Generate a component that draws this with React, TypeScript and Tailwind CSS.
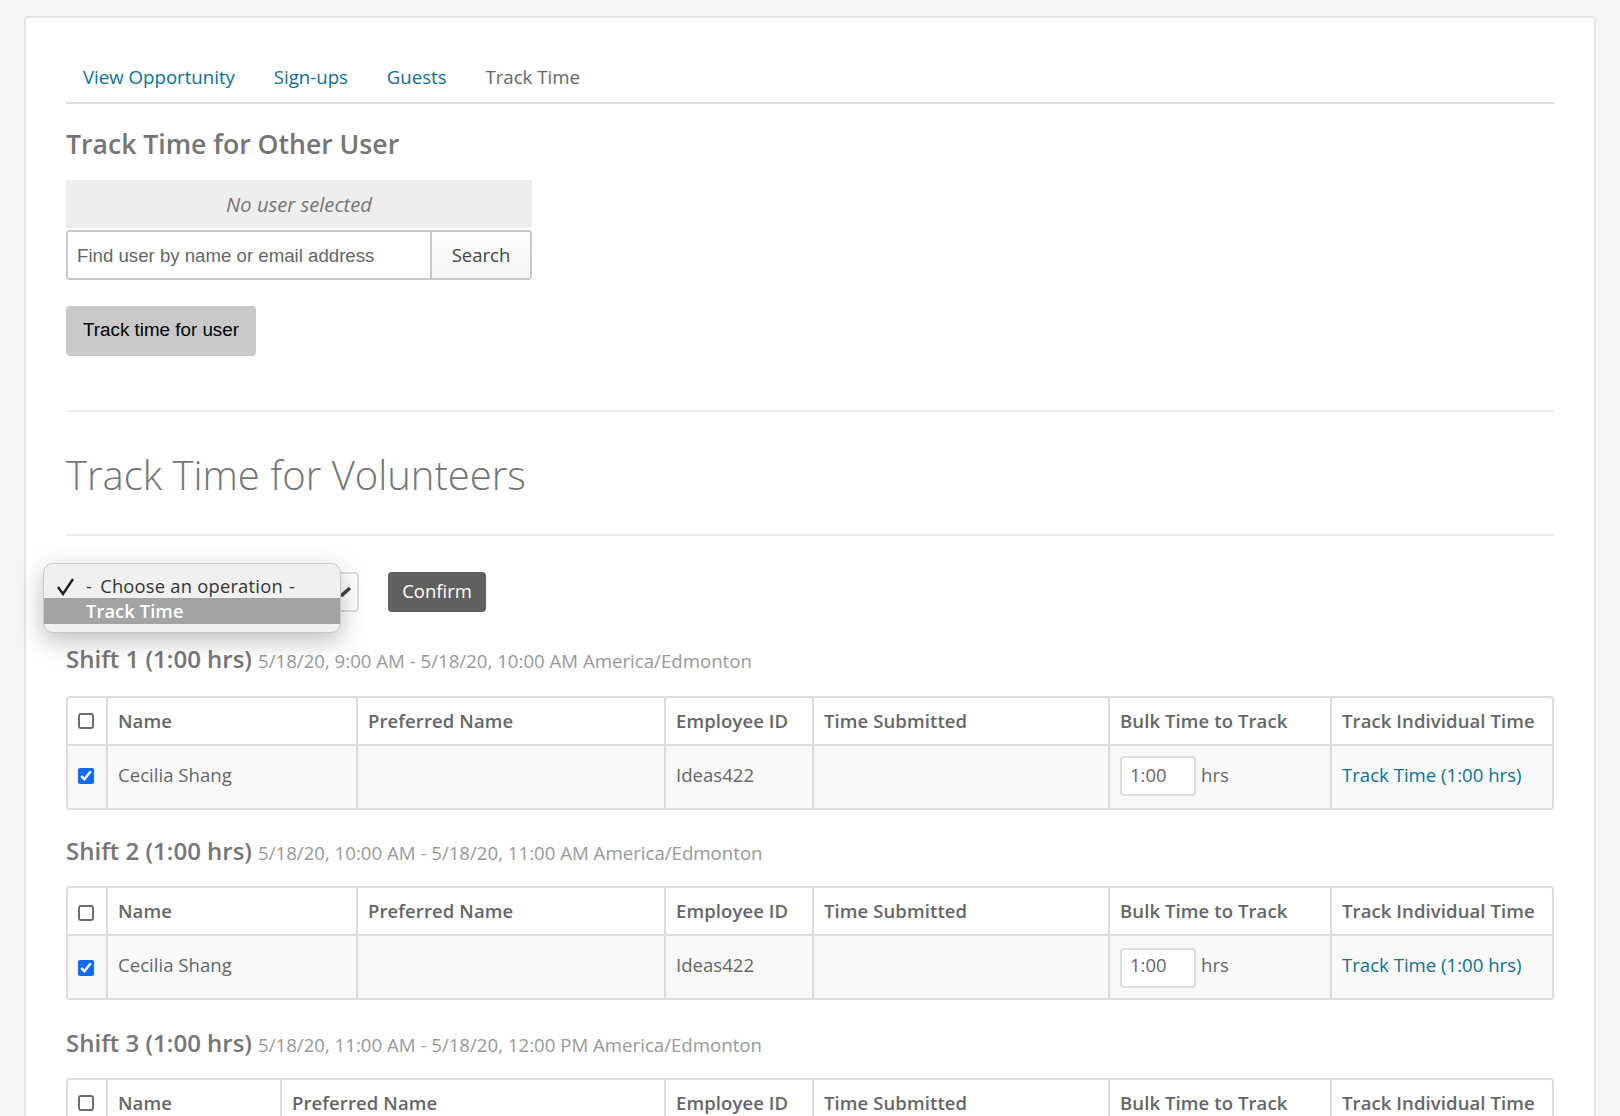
import React from 'react'

const font = "font-['Open_Sans',sans-serif]";

function Cell({ children, className = '' }: { children?: React.ReactNode; className?: string }) {
  return <div className={`flex items-center pl-[10px] border-l-2 border-[#dddddd] first:border-l-0 ${className}`}>{children}</div>;
}

function ShiftTable({ narrowName, lowered }: { narrowName?: boolean; lowered?: boolean }) {
  const cols = narrowName
    ? 'grid-cols-[38px_174px_384px_148px_296px_222px_1fr]'
    : 'grid-cols-[38px_250px_308px_148px_296px_222px_1fr]';
  const heads = ['Name', 'Preferred Name', 'Employee ID', 'Time Submitted', 'Bulk Time to Track', 'Track Individual Time'];

  return (
    <div className="border-2 border-[#dddddd] rounded-[4px] w-[1488px]">
      <div className={`grid ${cols} h-[48px] border-b-2 border-[#dddddd] font-semibold text-[#666666] text-[18.5px] tracking-[0.1px]`}>
        <Cell className={`justify-center !pl-0 pr-[2px] ${lowered ? 'pt-[3px]' : ''}`}>
          <input type="checkbox" className="appearance-none w-[16px] h-[16px] bg-white border-2 border-[#6e6e6e] rounded-[3px]" />
        </Cell>
        {heads.map((h) => <Cell key={h}>{h}</Cell>)}
      </div>
      <div className={`grid ${cols} h-[62px] bg-[#f9f9f9] text-[#666666] text-[18.6px]`}>
        <Cell className={`justify-center !pl-0 pr-[2px] ${lowered ? 'pt-[1px]' : 'pb-[3px]'}`}>
          <input type="checkbox" defaultChecked className="w-[16px] h-[16px] accent-[#0b6bf5]" />
        </Cell>
        <Cell className="pb-[5px]">Cecilia Shang</Cell>
        <Cell />
        <Cell className="pb-[5px]">Ideas422</Cell>
        <Cell />
        <Cell className={lowered ? 'pt-[1px]' : 'pb-[3px]'}>
          <input
            readOnly
            value="1:00"
            className={`w-[76px] h-[40px] bg-white border-2 border-[#dddddd] rounded-[4px] pl-[8px] text-[18.5px] text-[#666666] outline-none ${lowered ? 'pb-[6px]' : 'pb-[2px]'}`}
          />
          <span className={`ml-[5px] ${lowered ? 'pb-[6px]' : 'pb-[2px]'}`}>hrs</span>
        </Cell>
        <Cell className="pb-[5px]"><span className="text-[#0f6f8f]">Track Time (1:00 hrs)</span></Cell>
      </div>
    </div>
  );
}

function ShiftHead({ title, when }: { title: string; when: string }) {
  return (
    <div className="flex items-baseline h-[34px]">
      <span className="font-semibold text-[24px] text-[#757575]">{title}</span>
      <span className="ml-[6px] text-[18.65px] text-[#999999]">{when}</span>
    </div>
  );
}

export default function App() {
  return (
    <div className={`${font} h-[1116px] overflow-hidden bg-[#f5f5f5] pt-[16px] pl-[24px]`}>
      <div className="relative w-[1572px] h-[1200px] bg-white border-2 border-[#e5e5e5] rounded-[4px] pt-[39px] px-[40px]">
        {/* Tabs */}
        <div className="flex items-center gap-[38.8px] pl-[17px] h-[47px] pb-[6px] border-b-2 border-[#dddddd] text-[18.65px] text-[#0f6f8f]">
          <a>View Opportunity</a>
          <a>Sign-ups</a>
          <a>Guests</a>
          <a className="text-[#666666]">Track Time</a>
        </div>

        {/* Other user */}
        <h2 className="mt-[21px] h-[38px] leading-[38px] font-semibold text-[26.6px] text-[#757575]">Track Time for Other User</h2>
        <div className="mt-[17px] w-[466px]">
          <div className="h-[48px] flex items-center justify-center bg-[#eeeeee] italic text-[20.2px] text-[#757575]">No user selected</div>
          <div className="mt-[2px] flex h-[50px] border-2 border-[#c8c8c8] rounded-[4px] overflow-hidden">
            <div className="flex-1 flex items-center pl-[9px] pt-[1px] bg-white font-['Liberation_Sans',sans-serif] text-[18.65px] text-[#666666]">Find user by name or email address</div>
            <div className="w-[100px] flex items-center justify-center border-l-2 border-[#c8c8c8] bg-gradient-to-b from-white to-[#f3f4f6] text-[18.5px] text-[#444444]">Search</div>
          </div>
        </div>
        <button className="mt-[26px] block w-[190px] h-[50px] pb-[2px] bg-[#c9c9c9] rounded-[4px] font-['Liberation_Sans',sans-serif] text-[18.8px] text-black">Track time for user</button>

        <hr className="mt-[54px] border-t-2 border-[#eeeeee]" />

        <h1 className="mt-[32px] h-[62px] leading-[62px] font-light text-[40px] text-[#757575]">Track Time for Volunteers</h1>

        <hr className="mt-[28px] border-t-2 border-[#eeeeee]" />

        {/* Operation */}
        <div className="mt-[36px] flex items-center">
          <div className="relative w-[293px] h-[40px] border-2 border-[#dddddd] rounded-[4px] bg-white">
            <svg className="absolute right-[5px] top-[11px]" width="12" height="12" viewBox="0 0 12 12">
              <path d="M1 11 L10 3" stroke="#444444" strokeWidth="3.5" fill="none" />
            </svg>
          </div>
          <button className="ml-[29px] w-[98px] h-[40px] pb-[2px] bg-[#606060] rounded-[4px] text-[18.5px] text-white">Confirm</button>
        </div>

        <div className="absolute left-[17px] top-[545px] w-[298px] h-[70px] pt-[9px] rounded-[10px] bg-[#f0f0f0] border border-[#c8c8c8] shadow-[0_8px_24px_rgba(0,0,0,0.25)] overflow-hidden text-[18.3px]">
          <div className="relative h-[25px] leading-[25px] pl-[42px] text-[#333333] tracking-[0.25px]">
            <svg className="absolute left-[12px] top-[3px]" width="20" height="20" viewBox="0 0 20 20">
              <path d="M2 11 L7 18 L17 3" stroke="#222222" strokeWidth="2.4" fill="none" />
            </svg>
            <span className="mr-[3px]">-</span> Choose an operation <span className="ml-[1px]">-</span>
          </div>
          <div className="h-[26px] leading-[26px] pl-[42px] bg-[#a3a3a3] text-white font-semibold tracking-[0.1px]">Track Time</div>
        </div>

        {/* Shifts */}
        <div className="mt-[29px]">
          <ShiftHead title="Shift 1 (1:00 hrs)" when="5/18/20, 9:00 AM - 5/18/20, 10:00 AM America/Edmonton" />
        </div>
        <div className="mt-[21px]"><ShiftTable /></div>
        <div className="mt-[23px]">
          <ShiftHead title="Shift 2 (1:00 hrs)" when="5/18/20, 10:00 AM - 5/18/20, 11:00 AM America/Edmonton" />
        </div>
        <div className="mt-[19px]"><ShiftTable lowered /></div>
        <div className="mt-[25px]">
          <ShiftHead title="Shift 3 (1:00 hrs)" when="5/18/20, 11:00 AM - 5/18/20, 12:00 PM America/Edmonton" />
        </div>
        <div className="mt-[19px]"><ShiftTable narrowName /></div>
      </div>
    </div>
  );
}
